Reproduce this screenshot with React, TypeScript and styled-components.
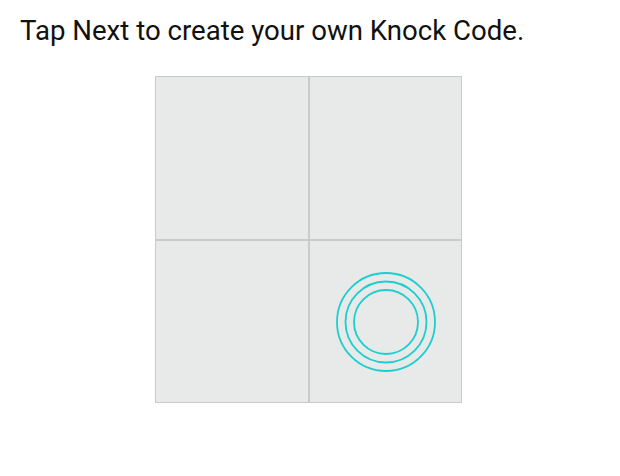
import React from "react";
import styled, { createGlobalStyle } from "styled-components";

const Global = createGlobalStyle`
  html, body { margin: 0; padding: 0; background: #ffffff; }
  body { font-family: Roboto, "Noto Sans", sans-serif; }
`;

const Page = styled.div`
  width: 620px;
  height: 476px;
  display: flex;
  flex-direction: column;
  background: #ffffff;
`;

const Title = styled.h1`
  margin: 0;
  padding: 14px 0 0 20px;
  font-family: Roboto, sans-serif;
  font-weight: 400;
  font-size: 27.6px;
  line-height: 34px;
  color: #111111;
`;

const Grid = styled.div`
  align-self: flex-start;
  margin: 28px 0 0 155px;
  width: 307px;
  height: 327px;
  box-sizing: border-box;
  display: grid;
  grid-template-columns: 1fr 1fr;
  grid-template-rows: 1fr 1fr;
  background: #c9cacc;
  border: 1px solid #c9cacc;
  gap: 2px;
`;

const Cell = styled.div`
  background: #e8e9e9;
  position: relative;
`;

const Ripple = styled.svg`
  position: absolute;
  left: 25.5px;
  top: 30px;
`;

const KnockMark = () => (
  <Ripple width="102" height="102" viewBox="0 0 102 102">
    <g fill="none" stroke="#1ccfcf" strokeWidth="1.8">
      <circle cx="51" cy="51" r="49" />
      <circle cx="51" cy="51" r="40.5" />
      <circle cx="51" cy="51" r="32" />
    </g>
  </Ripple>
);

export default function App() {
  return (
    <Page>
      <Global />
      <Title>Tap Next to create your own Knock Code.</Title>
      <Grid>
        <Cell />
        <Cell />
        <Cell />
        <Cell>
          <KnockMark />
        </Cell>
      </Grid>
    </Page>
  );
}
